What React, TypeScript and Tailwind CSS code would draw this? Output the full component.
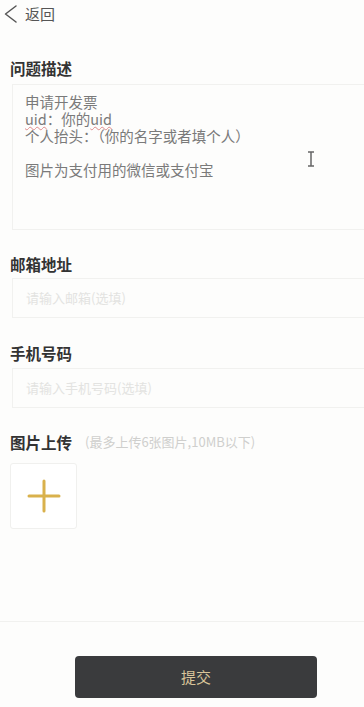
const font = "font-['Noto_Sans_CJK_SC','Noto_Sans',sans-serif]";

function Label({ children }: { children: React.ReactNode }) {
  return <h2 className="text-[15.5px] font-bold leading-[20px] text-[#333]">{children}</h2>;
}

function Field({ placeholder }: { placeholder: string }) {
  return (
    <div className="ml-[2px] flex h-[40px] items-center border-y border-l border-[#f1f1ef] pl-[13px] text-[13px] text-[#e3e3e1]">
      {placeholder}
    </div>
  );
}

const wavy =
  "inline-block leading-[17px] underline decoration-[#e08a8a] decoration-wavy decoration-1 underline-offset-[1px]";

export default function App() {
  return (
    <div className={`${font} flex min-h-[707px] flex-col bg-[#fdfdfc]`}>
      <header className="flex h-[28px] items-center">
        <svg width="22" height="28" viewBox="0 0 22 28">
          <path d="M16 6 5.5 14 16 22" stroke="#555" strokeWidth="1.5" fill="none" strokeLinecap="round" strokeLinejoin="round" />
        </svg>
        <span className="ml-[3px] text-[15px] text-[#555]">返回</span>
      </header>

      <main className="flex flex-col pl-[10px]">
        <div className="mt-[30px]">
          <Label>问题描述</Label>
        </div>
        <div className="relative ml-[2px] mt-[6px] h-[146px] border-y border-l border-[#f1f1ef] pl-[12px] pt-[8px] text-[14.5px] leading-[17px] text-[#7a7a7a]">
          <p>申请开发票</p>
          <p className="h-[17px]">
            <span className={wavy}>uid</span>
            <span className="inline-block leading-[17px]">：你的</span>
            <span className={wavy}>uid</span>
          </p>
          <p>个人抬头：（你的名字或者填个人）</p>
          <p>&nbsp;</p>
          <p>图片为支付用的微信或支付宝</p>
          <svg className="absolute left-[294px] top-[66px]" width="8" height="16" viewBox="0 0 8 16">
            <path d="M1 1h6M1 15h6M4 1v14" stroke="#666" strokeWidth="1.5" fill="none" />
          </svg>
        </div>

        <div className="mt-[24px]">
          <Label>邮箱地址</Label>
        </div>
        <div className="mt-[4px]">
          <Field placeholder="请输入邮箱(选填)" />
        </div>

        <div className="mt-[25px]">
          <Label>手机号码</Label>
        </div>
        <div className="mt-[5px]">
          <Field placeholder="请输入手机号码(选填)" />
        </div>

        <div className="mt-[24px] flex items-center gap-[13px]">
          <Label>图片上传</Label>
          <span className="text-[13px] text-[#cfcfcd]">(最多上传6张图片,10MB以下)</span>
        </div>
        <button className="mt-[11px] flex h-[66px] w-[67px] items-center justify-center rounded-[3px] border border-[#f0f0ee] bg-white">
          <svg width="34" height="34" viewBox="0 0 34 34">
            <path d="M17 2v30M2 17h30" stroke="#d9b14c" strokeWidth="3" strokeLinecap="round" />
          </svg>
        </button>
      </main>

      <div className="mt-[92px] border-t border-[#f1f1ef]" />

      <div className="flex justify-center pt-[34px] pl-[28px]">
        <button className="h-[42px] w-[242px] rounded-[4px] bg-[#3a3b3d] text-[15px] text-[#d9c59a]">
          提交
        </button>
      </div>
    </div>
  );
}
